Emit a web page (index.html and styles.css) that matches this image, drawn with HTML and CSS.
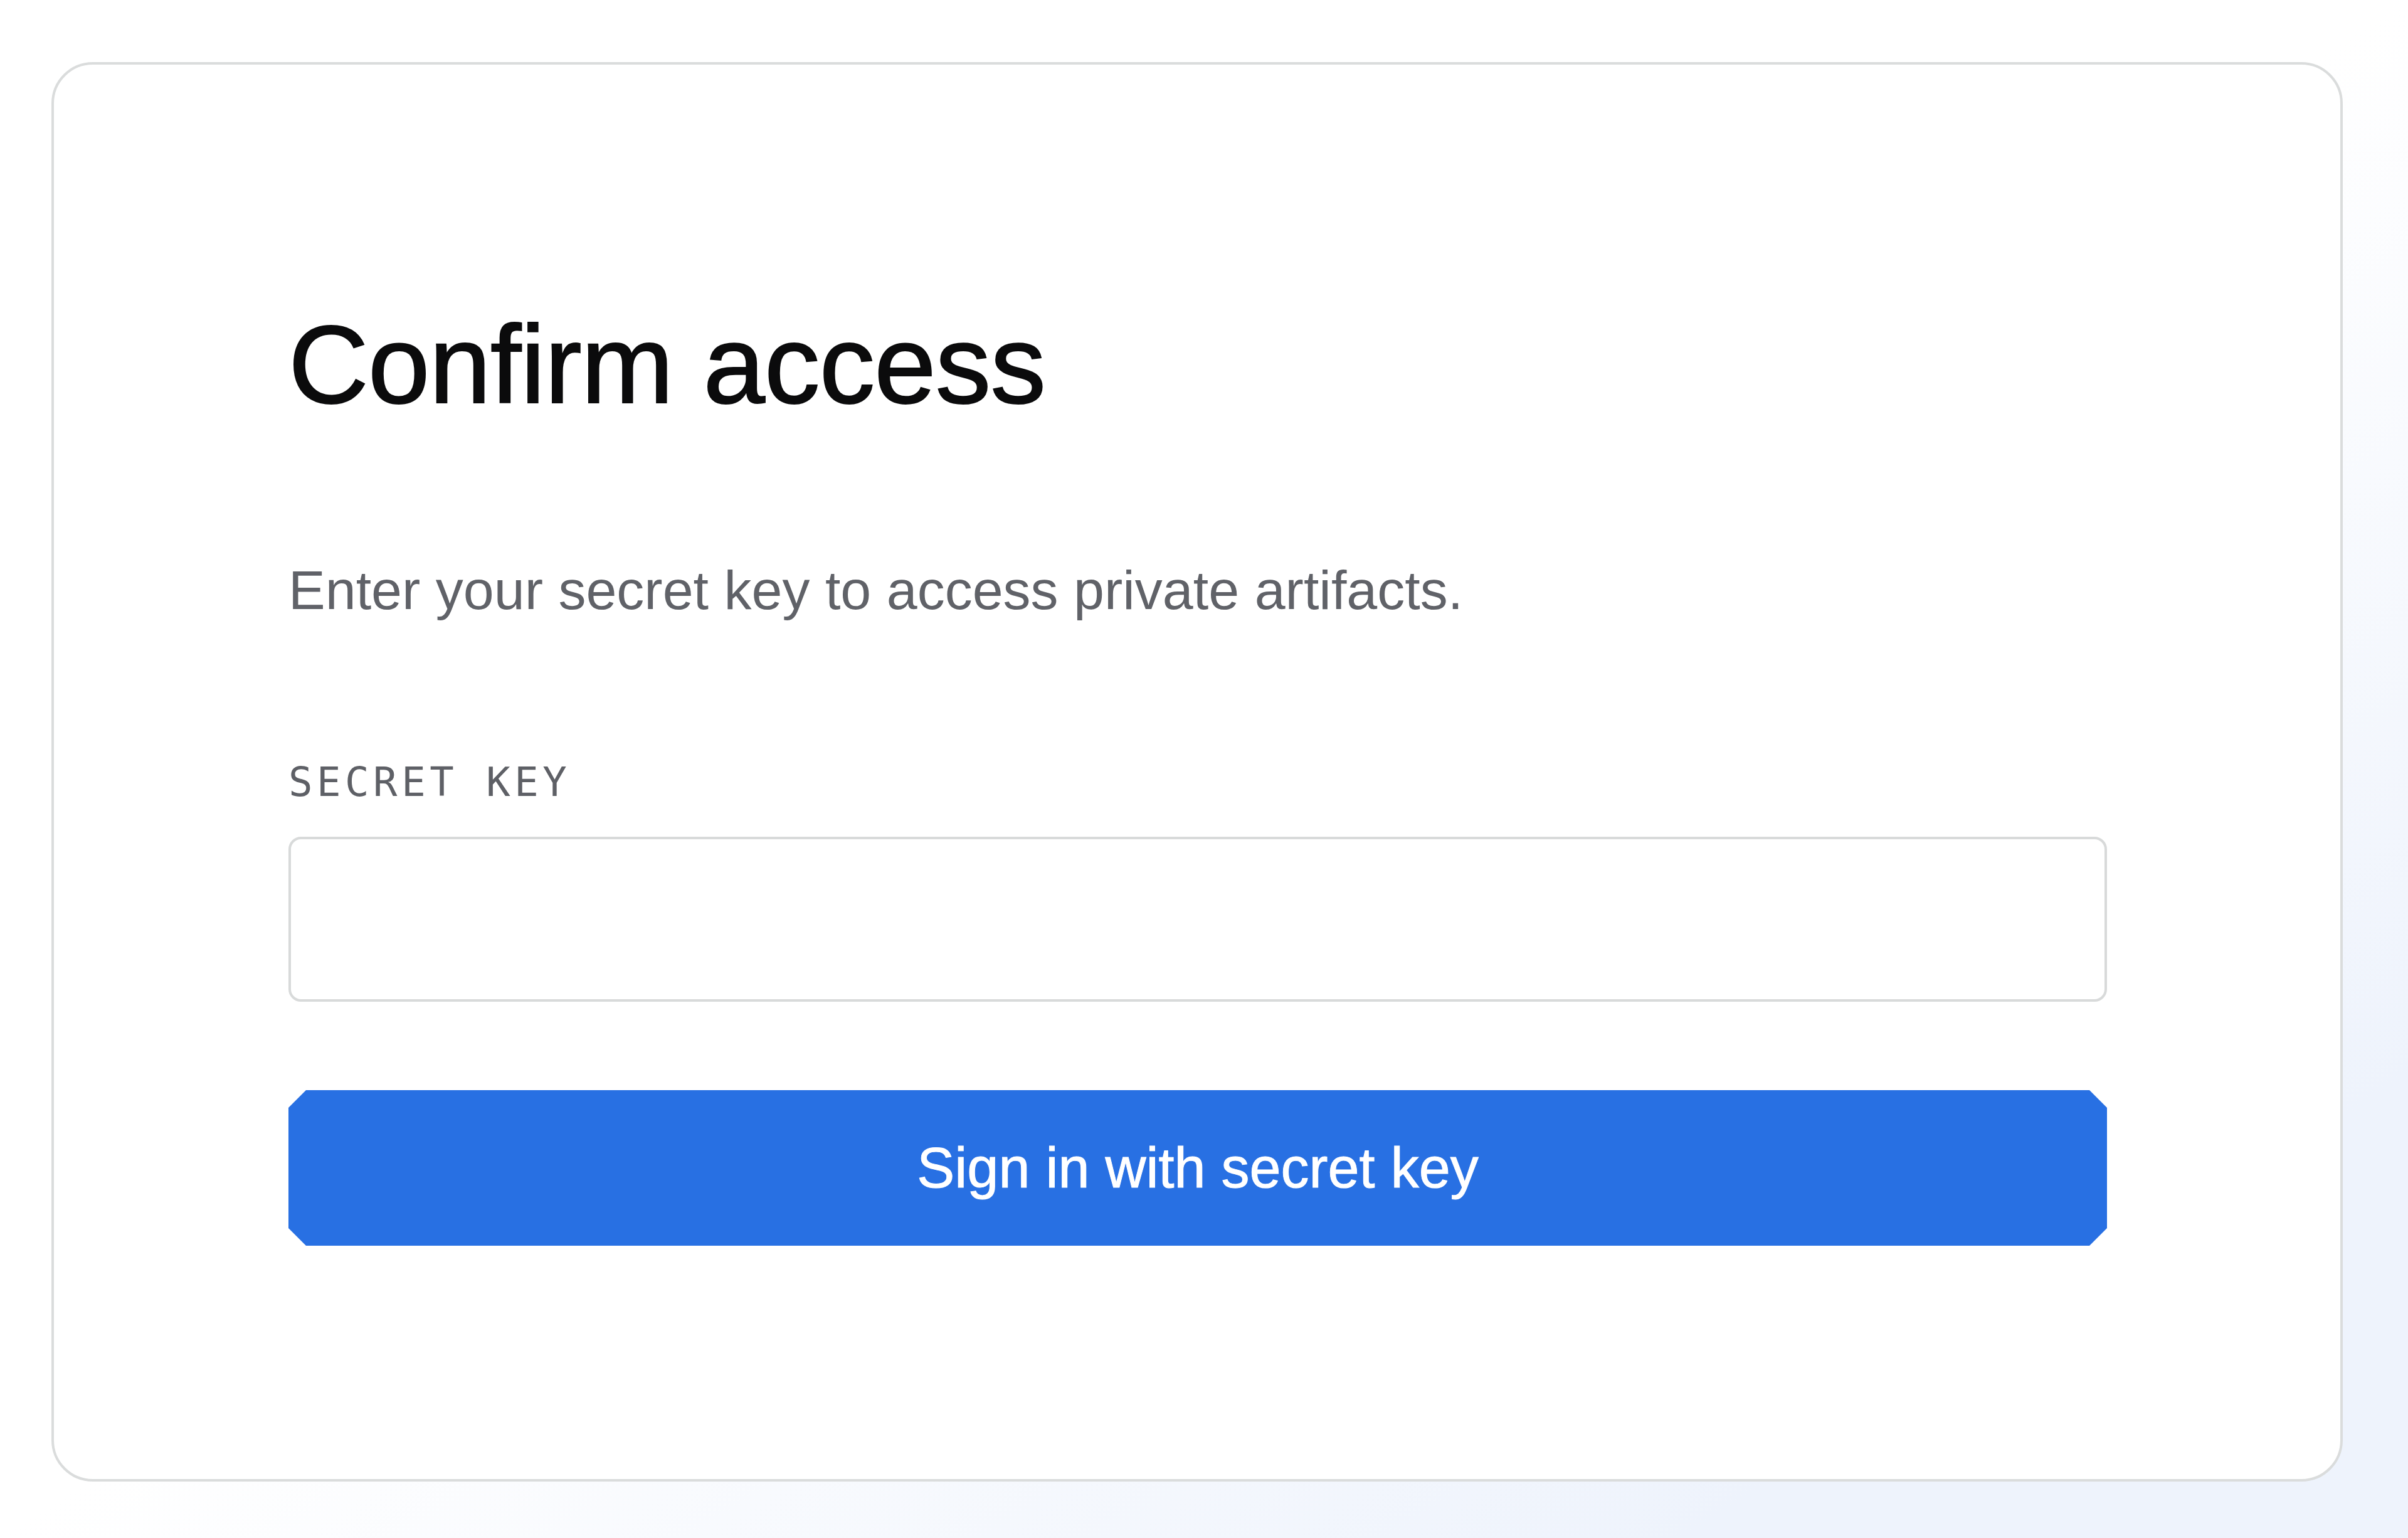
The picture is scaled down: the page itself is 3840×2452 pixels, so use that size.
FILE: index.html
```html
<!DOCTYPE html>
<html lang="en">
<head>
<meta charset="utf-8">
<title>Confirm access</title>
<link rel="stylesheet" href="styles.css">
</head>
<body>
<main class="page">
  <section class="card">
    <h1 class="title">Confirm access</h1>
    <p class="subtitle">Enter your secret key to access private artifacts.</p>
    <label class="label" for="secret">SECRET KEY</label>
    <input class="field" id="secret" type="password">
    <button class="submit" type="button">Sign in with secret key</button>
  </section>
</main>
</body>
</html>
```

FILE: styles.css
```css
* { box-sizing: border-box; }

html, body {
  margin: 0;
  padding: 0;
}

body {
  min-height: 100vh;
  background: linear-gradient(to bottom right, #ffffff 50%, #eef3fc 85%);
  font-family: "Liberation Sans", Arial, sans-serif;
}

.page {
  padding: 99px 104px 90px 82px;
}

.card {
  display: flex;
  flex-direction: column;
  align-items: stretch;
  background: #ffffff;
  border: 4px solid #dadcdc;
  border-radius: 66px;
  padding: 390px 372px 372px 374px;
}

.title {
  margin: 0;
  font-size: 177px;
  line-height: 1;
  font-weight: 400;
  letter-spacing: -0.9px;
  color: #0b0b0c;
  -webkit-text-stroke: 2px #0b0b0c;
}

.subtitle {
  margin: 227px 0 0;
  font-size: 88px;
  line-height: 1;
  color: #606268;
}

.label {
  margin-top: 230px;
  font-family: "DejaVu Sans Mono", "Liberation Mono", monospace;
  font-size: 64px;
  line-height: 1;
  letter-spacing: 6.5px;
  color: #5e6066;
}

.field {
  margin-top: 55px;
  height: 263px;
  border: 4px solid #d8dada;
  border-radius: 20px;
  background: #ffffff;
  font-size: 80px;
  padding: 0 40px;
  outline: none;
}

.submit {
  margin-top: 141px;
  height: 248px;
  border: none;
  background: #2870e3;
  color: #ffffff;
  font-family: "Liberation Sans", Arial, sans-serif;
  font-size: 90px;
  line-height: 1;
  -webkit-text-stroke: 1px #ffffff;
  clip-path: polygon(28px 0, calc(100% - 28px) 0, 100% 28px, 100% calc(100% - 28px), calc(100% - 28px) 100%, 28px 100%, 0 calc(100% - 28px), 0 28px);
  cursor: pointer;
}
```
